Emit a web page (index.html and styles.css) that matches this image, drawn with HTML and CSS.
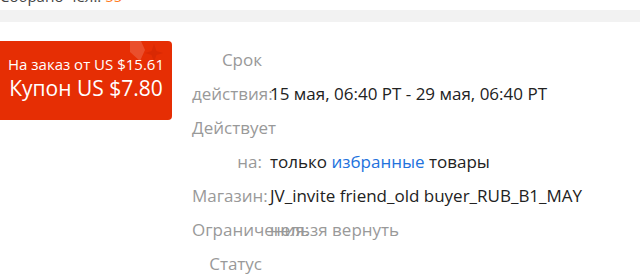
FILE: index.html
```html
<!DOCTYPE html>
<html lang="ru">
<head>
    <meta charset="UTF-8">
    <title>Купон</title>
    <link rel="stylesheet" href="styles.css">
</head>
<body>
    <div class="top-line">Собрано чел.: <span class="count">55</span></div>
    <div class="band"></div>

    <div class="main">
        <div class="coupon">
            <svg class="coupon-deco" width="40" height="24" viewBox="0 0 40 24">
                <path d="M2 0 H13 L17 9 L12 20 L2 11 Z" fill="rgba(255,255,255,0.16)"/>
                <path d="M26 3 L28.5 10 L35 12 L28.5 14 L26 21 L23.5 14 L17 12 L23.5 10 Z" fill="rgba(160,20,0,0.18)"/>
            </svg>
            <div class="coupon-min">На заказ от US $15.61</div>
            <div class="coupon-value">Купон US $7.80</div>
        </div>

        <div class="details">
            <div class="row">
                <div class="label">Срок действия:</div>
                <div class="value">15 мая, 06:40 PT - 29 мая, 06:40 PT</div>
            </div>
            <div class="row">
                <div class="label">Действует на:</div>
                <div class="value">только <span class="link">избранные</span> товары</div>
            </div>
            <div class="row">
                <div class="label">Магазин:</div>
                <div class="value">JV_invite friend_old buyer_RUB_B1_MAY</div>
            </div>
            <div class="row">
                <div class="label">Ограничения:</div>
                <div class="value muted">нельзя вернуть</div>
            </div>
            <div class="row">
                <div class="label">Статус</div>
                <div class="value"></div>
            </div>
        </div>
    </div>
</body>
</html>
```

FILE: styles.css
```css
* {
    margin: 0;
    padding: 0;
    box-sizing: border-box;
}

body {
    font-family: 'Open Sans', 'Noto Sans', sans-serif;
    background: #fff;
    color: #222;
    overflow: hidden;
}

.top-line {
    margin-top: -15px;
    height: 24px;
    line-height: 22px;
    font-size: 15px;
    color: #444;
    margin-bottom: 1px;
}

.count {
    color: #ff7a1a;
}

.band {
    height: 12px;
    background: #f2f2f2;
}

.main {
    display: flex;
    align-items: flex-start;
    gap: 20px;
    margin-top: 19px;
}

.coupon {
    position: relative;
    width: 172px;
    height: 79px;
    flex-shrink: 0;
    background: #e62e04;
    border-radius: 0 4px 4px 0;
    color: #fff;
    text-align: center;
    padding-top: 13px;
    overflow: hidden;
}

.coupon-deco {
    position: absolute;
    top: 0;
    right: 4px;
}

.coupon-min {
    font-size: 15px;
    line-height: 20px;
    white-space: nowrap;
}

.coupon-value {
    font-size: 21px;
    line-height: 28px;
    white-space: nowrap;
}

.details {
    padding-top: 2px;
    font-size: 17px;
    line-height: 34px;
}

.row {
    display: flex;
    align-items: flex-end;
    gap: 8px;
}

.label {
    width: 70px;
    min-width: 0;
    flex-shrink: 0;
    text-align: right;
    color: #999;
}

.value {
    color: #222;
    white-space: nowrap;
}

.value.muted {
    color: #999;
}

.link {
    color: #2272dd;
}
```
